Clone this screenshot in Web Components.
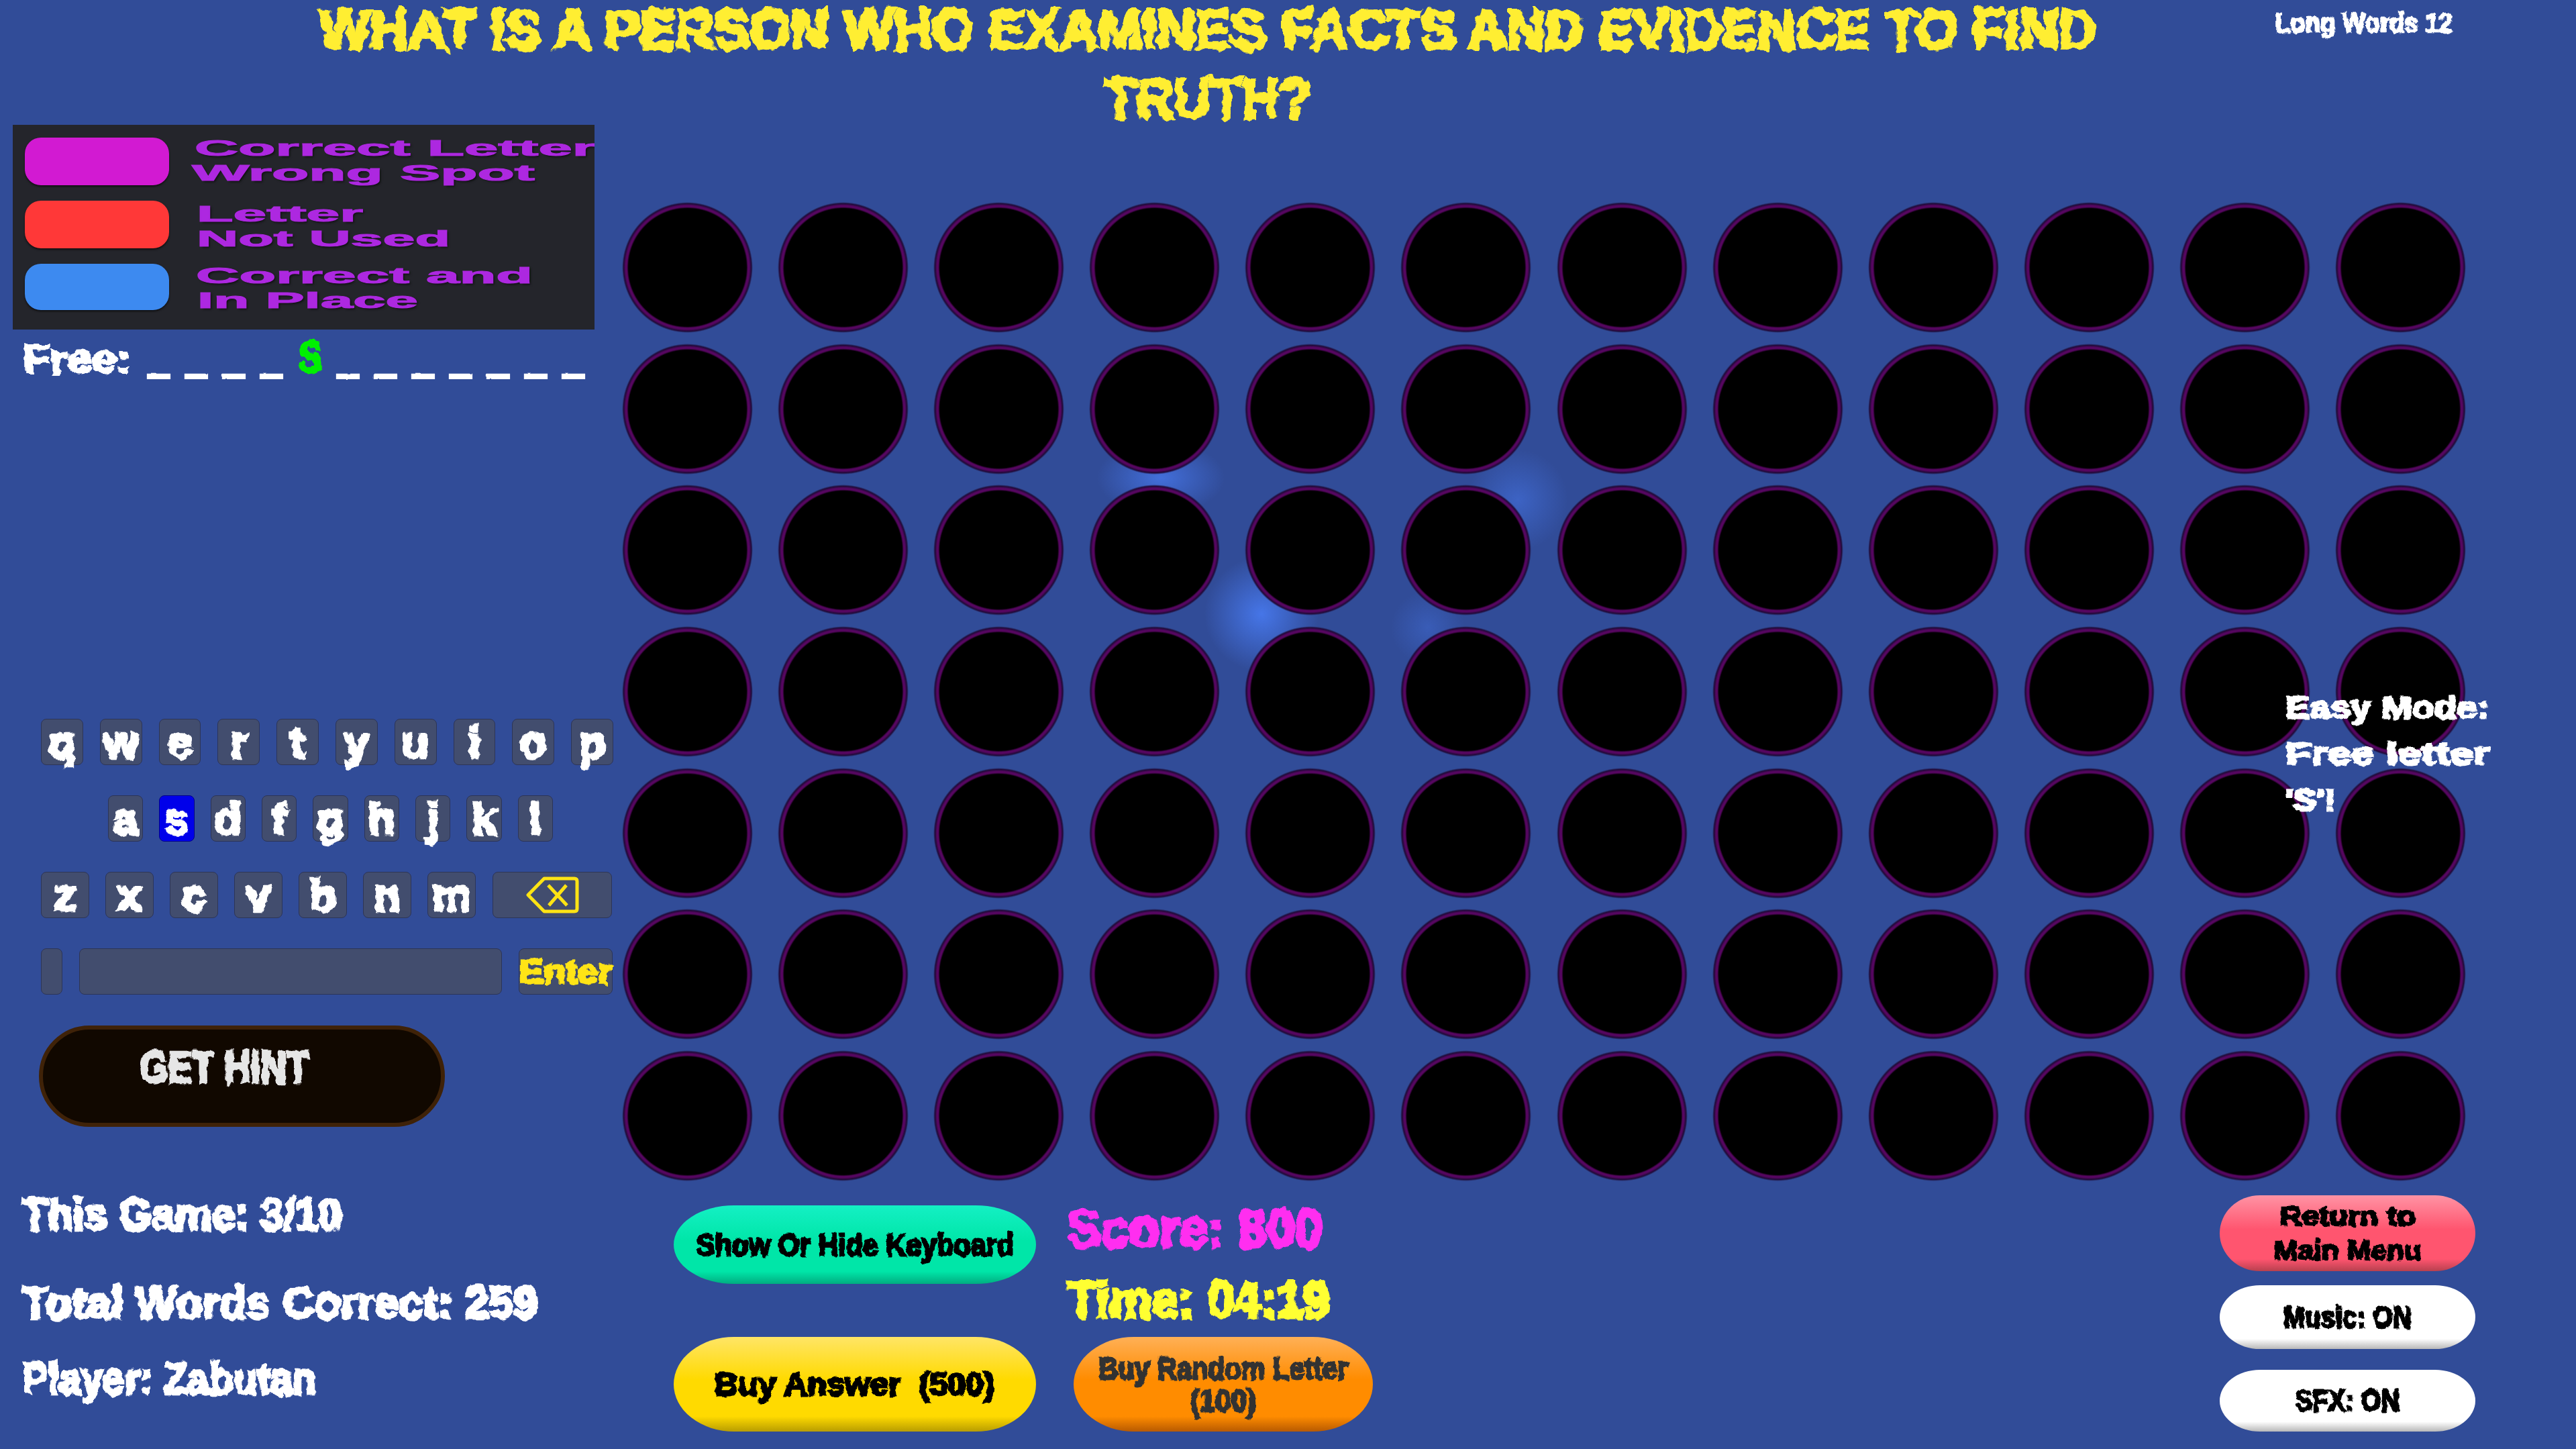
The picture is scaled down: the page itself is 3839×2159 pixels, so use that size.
<!DOCTYPE html>
<html lang="en">
<head>
<meta charset="utf-8">
<title>Long Words</title>
<style>
  html, body { margin: 0; padding: 0; background: #314c98; overflow: hidden; }
</style>
</head>
<body>

<game-screen>
  <quiz-header slot="top"></quiz-header>
  <side-panel slot="left"></side-panel>
  <play-area slot="main"></play-area>
</game-screen>

<script>
const FONT = '"Liberation Sans", Arial, sans-serif'
const measure = document.createElement("canvas").getContext("2d")
let roughId = 0

// one line of the game's lumpy text, squeezed to the width it has in the game
class FitText extends HTMLElement {
  constructor() {
    super()
    this.attachShadow({ mode: "open" })
  }
  connectedCallback() {
    const size = +(this.getAttribute("size") || 60)
    const w = this.getAttribute("w")
    const stroke = this.getAttribute("stroke") || size * 0.065
    const rough = +(this.getAttribute("rough") || size * 0.1)
    const id = "rough" + roughId++
    let sx = 1
    if (w) {
      measure.font = `bold ${size}px "Liberation Sans"`
      sx = +w / measure.measureText(this.textContent.trim()).width
    }
    this.shadowRoot.innerHTML = `
      <style>
        :host { display: inline-block; font: bold ${size}px/1 ${FONT}; ${w ? `width:${w}px;` : ""} }
        span {
          display: inline-block;
          white-space: pre;
          transform: scaleX(${sx});
          transform-origin: 0 0;
          -webkit-text-stroke: ${stroke}px currentColor;
          text-shadow: var(--fit-shadow, none);
          ${rough > 0 ? `filter: url(#${id});` : ""}
        }
        svg { position: absolute; width: 0; height: 0; }
      </style>
      <svg aria-hidden="true"><filter id="${id}" x="-5%" y="-30%" width="110%" height="160%">
        <feTurbulence type="fractalNoise" baseFrequency="${(5 / size).toFixed(3)}" numOctaves="2" seed="${roughId % 7}"/>
        <feDisplacementMap in="SourceGraphic" scale="${rough * 2.2}" xChannelSelector="R" yChannelSelector="G"/>
      </filter></svg>
      <span><slot></slot></span>`
  }
}
customElements.define("fit-text", FitText)

class GameScreen extends HTMLElement {
  constructor() {
    super()
    const shadow = this.attachShadow({ mode: "open" })
    shadow.innerHTML = `
      <style>
        :host {
          display: grid;
          width: 3839px;
          height: 2159px;
          grid-template-columns: 928px 1fr;
          grid-template-rows: 186px 1fr;
          font-family: ${FONT};
          background:
            radial-gradient(ellipse 95px 55px at 1730px 712px, rgba(72,122,240,.75), rgba(72,122,240,0)),
            radial-gradient(circle 85px at 1880px 915px, rgba(72,122,240,.9), rgba(72,122,240,0)),
            radial-gradient(circle 75px at 2262px 745px, rgba(72,122,240,.5), rgba(72,122,240,0)),
            radial-gradient(circle 55px at 2128px 935px, rgba(72,122,240,.35), rgba(72,122,240,0)),
            #314c98;
        }
        .top { grid-column: 1 / 3; }
      </style>
      <div class="top"><slot name="top"></slot></div>
      <slot name="left"></slot>
      <slot name="main"></slot>`
  }
}
customElements.define("game-screen", GameScreen)

class QuizHeader extends HTMLElement {
  constructor() {
    super()
    const shadow = this.attachShadow({ mode: "open" })
    shadow.innerHTML = `
      <style>
        :host { display: flex; height: 186px; padding-top: 3px; box-sizing: border-box; color: #ffee33; }
        .q { display: flex; flex-direction: column; align-items: center; gap: 20px; width: 2700px; margin-left: 455px; }
        .label { color: #fff; margin-left: 236px; padding-top: 11px; }
      </style>
      <div class="q">
        <fit-text size="82" w="2656" rough="8">WHAT IS A PERSON WHO EXAMINES FACTS AND EVIDENCE TO FIND</fit-text>
        <fit-text size="82" w="308" rough="8" style="margin-right:10px">TRUTH?</fit-text>
      </div>
      <div class="label"><fit-text size="40" w="264" rough="3">Long Words 12</fit-text></div>`
  }
}
customElements.define("quiz-header", QuizHeader)

class ColorLegend extends HTMLElement {
  constructor() {
    super()
    const shadow = this.attachShadow({ mode: "open" })
    const row = (color, h, dy, a, aw, ax, b, bw, bx) => `
      <div class="row">
        <div class="swatch" style="background:${color};height:${h}px"></div>
        <div class="words" style="margin-top:${dy}px">
          <fit-text size="33" w="${aw}" rough="0" stroke="1" style="margin-left:${ax}px">${a}</fit-text>
          <fit-text size="33" w="${bw}" rough="0" stroke="1" style="margin-left:${bx}px">${b}</fit-text>
        </div>
      </div>`
    shadow.innerHTML = `
      <style>
        :host {
          display: flex;
          flex-direction: column;
          gap: 23px;
          width: 867px;
          height: 305px;
          margin-left: 19px;
          padding: 19px 0 0 18px;
          box-sizing: border-box;
          background: #24252b;
          overflow: hidden;
          color: #ad28e0;
          --fit-shadow: 1px 2px 2px rgba(0,0,0,.6);
        }
        .row { display: flex; align-items: flex-start; height: 71px; }
        .swatch { width: 215px; border-radius: 24px; flex: none; box-shadow: 0 2px 3px rgba(0,0,0,.6); }
        .words { display: flex; flex-direction: column; gap: 4px; margin-left: 33px; white-space: nowrap; }
        fit-text { display: block; }
      </style>
      ${row("#d21ad2", 71, -1, "Correct Letter,", 618, 5, "Wrong Spot", 511, 1)}
      ${row("#ff3838", 71, 3, "Letter", 248, 8, "Not Used", 378, 8)}
      ${row("#3d8af0", 69, 1, "Correct and", 502, 7, "In Place", 329, 9)}`
  }
}
customElements.define("color-legend", ColorLegend)

class FreeLetters extends HTMLElement {
  constructor() {
    super()
    const shadow = this.attachShadow({ mode: "open" })
    const pattern = "____S_______".split("")
    shadow.innerHTML = `
      <style>
        :host { display: flex; align-items: baseline; height: 60px; margin: 8px 0 0 35px; color: #fff; }
        .slots { display: flex; margin-left: 27px; align-items: baseline; }
        .slot { width: 56px; }
        .hit { color: #00f000; width: 58px; }
      </style>
      <fit-text size="60" w="160" rough="5">Free:</fit-text>
      <div class="slots">
        ${pattern.map(c => c == "_"
          ? `<div class="slot"><fit-text size="60" w="29" stroke="6" rough="1">_</fit-text></div>`
          : `<div class="slot hit"><fit-text size="66" w="34" rough="5">${c}</fit-text></div>`).join("")}
      </div>`
  }
}
customElements.define("free-letters", FreeLetters)

class KeyCap extends HTMLElement {
  constructor() {
    super()
    const shadow = this.attachShadow({ mode: "open" })
    shadow.innerHTML = `
      <style>
        :host {
          display: flex;
          align-items: center;
          justify-content: center;
          flex: var(--grow, 1) 1 0;
          height: 69px;
          box-sizing: border-box;
          background: #424d6e;
          border: 1px solid #2d3557;
          border-radius: 8px;
          color: #fff;
        }
        :host([on]) { background: #0000ea; border-color: #00008a; }
      </style>
      <slot></slot>`
  }
}
customElements.define("key-cap", KeyCap)

class KeyBoard extends HTMLElement {
  constructor() {
    super()
    const shadow = this.attachShadow({ mode: "open" })
    const letter = c => `<key-cap ${c == "s" ? "on" : ""}><fit-text size="66" rough="5">${c}</fit-text></key-cap>`
    const keys = s => s.split("").map(letter).join("")
    shadow.innerHTML = `
      <style>
        :host { display: flex; flex-direction: column; gap: 45px; width: 853px; margin: 512px 0 0 61px; }
        .row { display: flex; gap: 25px; }
        .home { gap: 24px; padding: 0 90px 0 100px; }
        svg { width: 79px; height: 55px; display: block; }
        .enter { color: #ffe414; }
      </style>
      <div class="row">${keys("qwertyuiop")}</div>
      <div class="row home">${keys("asdfghjkl")}</div>
      <div class="row">
        ${keys("zxcvbnm").replace(/<key-cap /g, '<key-cap style="flex:0 0 72px;margin-right:-1px" ')}
        <key-cap style="flex:0 0 178px;margin-left:1px">
          <svg viewBox="0 0 79 55" fill="none" stroke="#ffe414" stroke-width="5" stroke-linejoin="round" stroke-linecap="butt">
            <path d="M27 3 H72 Q76 3 76 7 V48 Q76 52 72 52 H27 L3 27.5 Z"/>
            <path d="M33 13 L61 43 M60 13 L34 43"/>
          </svg>
        </key-cap>
      </div>
      <div class="row">
        <key-cap style="flex:0 0 32px"></key-cap>
        <key-cap style="flex:0 0 630px"></key-cap>
        <key-cap class="enter" style="flex:0 0 140px"><fit-text size="50" w="138" rough="4">Enter</fit-text></key-cap>
      </div>`
  }
}
customElements.define("key-board", KeyBoard)

class HintButton extends HTMLElement {
  constructor() {
    super()
    const shadow = this.attachShadow({ mode: "open" })
    shadow.innerHTML = `
      <style>
        :host {
          display: block;
          width: 605px;
          height: 151px;
          margin: 46px 0 0 58px;
          padding: 22px 0 0 145px;
          box-sizing: border-box;
          background: #110800;
          border: 6px solid #3f2208;
          border-radius: 76px;
          color: #e6e6e6;
        }
      </style>
      <fit-text size="67" w="251" rough="5">GET HINT</fit-text>`
  }
}
customElements.define("hint-button", HintButton)

class SidePanel extends HTMLElement {
  constructor() {
    super()
    const shadow = this.attachShadow({ mode: "open" })
    shadow.innerHTML = `
      <style>
        :host { display: block; color: #fff; }
        .stats { display: flex; flex-direction: column; align-items: flex-start; margin: 97px 0 0 33px; }
      </style>
      <color-legend></color-legend>
      <free-letters></free-letters>
      <key-board></key-board>
      <hint-button></hint-button>
      <div class="stats">
        <fit-text size="66" w="476" rough="5">This Game: 3/10</fit-text>
        <fit-text size="66" w="768" rough="5" style="margin-top:66px">Total Words Correct: 259</fit-text>
        <fit-text size="66" w="438" rough="5" style="margin-top:47px">Player: Zabutan</fit-text>
      </div>`
  }
}
customElements.define("side-panel", SidePanel)

class PegHole extends HTMLElement {
  constructor() {
    super()
    const shadow = this.attachShadow({ mode: "open" })
    shadow.innerHTML = `
      <style>
        :host {
          display: block;
          width: 195px;
          height: 195px;
          border-radius: 50%;
          background: radial-gradient(closest-side, #000 0 90%, #560660 92.5%, #560660 94.5%, #200a38 97.5%, rgba(40,20,90,0) 100%);
        }
      </style>`
  }
}
customElements.define("peg-hole", PegHole)

class PillButton extends HTMLElement {
  constructor() {
    super()
    const shadow = this.attachShadow({ mode: "open" })
    shadow.innerHTML = `
      <style>
        :host {
          display: flex;
          flex-direction: column;
          align-items: center;
          justify-content: center;
          box-sizing: border-box;
          border-radius: 90px / 50%;
          color: #000;
          background: linear-gradient(var(--hi) 0, var(--mid) 45%, var(--mid) 84%, var(--lo) 100%);
        }
      </style>
      <slot></slot>`
  }
}
customElements.define("pill-button", PillButton)

class PlayArea extends HTMLElement {
  constructor() {
    super()
    const shadow = this.attachShadow({ mode: "open" })
    shadow.innerHTML = `
      <style>
        :host { display: block; position: relative; }
        .board {
          display: grid;
          grid-template-columns: repeat(12, 195px);
          column-gap: 37.1px;
          row-gap: 15.7px;
          padding: 115px 0 0;
          margin: 0 0 -1px -1px;
        }
        .note {
          position: absolute;
          left: 2478px;
          top: 845px;
          display: flex;
          flex-direction: column;
          align-items: flex-start;
          gap: 23px;
          color: #fff;
        }
        .controls { display: flex; padding-left: 76px; }
        .one { width: 540px; }
        .two { display: flex; flex-direction: column; align-items: flex-start; margin: 32px 0 0 47px; }
        .three { margin-left: auto; margin-right: 150px; width: 381px; padding-top: 22px; }
        .teal { --hi: #14f0c4; --mid: #00e6a8; --lo: #00ad80; }
        .gold { --hi: #ffe566; --mid: #ffda00; --lo: #b89d00; }
        .orange { --hi: #ffb056; --mid: #ff8c00; --lo: #b85a00; color: #333; }
        .pink { --hi: #ff93a4; --mid: #ff556f; --lo: #b8404f; }
        .white { --hi: #fff; --mid: #fff; --lo: #b8b8b8; }
        .round { border-radius: 60px / 50%; }
      </style>
      <div class="board">${"<peg-hole></peg-hole>".repeat(84)}</div>
      <div class="note">
        <fit-text size="46" w="304" rough="3">Easy Mode:</fit-text>
        <fit-text size="46" w="304" rough="3">Free letter</fit-text>
        <fit-text size="46" w="75" rough="3">'S'!</fit-text>
      </div>
      <div class="controls">
        <div class="one">
          <pill-button class="teal" style="height:117px;margin:37px 0 79px"><fit-text size="46" w="473" rough="3">Show Or Hide Keyboard</fit-text></pill-button>
          <pill-button class="gold" style="height:141px"><fit-text size="48" w="419" rough="3">Buy Answer  (500)</fit-text></pill-button>
        </div>
        <div class="two">
          <fit-text size="80" w="380" rough="6" style="color:#ff2ef0">Score: 800</fit-text>
          <fit-text size="76" w="391" rough="6" style="color:#ffff33;margin-top:28px">Time: 04:19</fit-text>
          <pill-button class="orange" style="height:141px;width:446px;margin:17px 0 0 9px;gap:2px">
            <fit-text size="46" w="372" rough="3">Buy Random Letter</fit-text>
            <fit-text size="46" w="98" rough="3">(100)</fit-text>
          </pill-button>
        </div>
        <div class="three">
          <pill-button class="pink round" style="height:113px;gap:11px">
            <fit-text size="40" w="202" rough="3">Return to</fit-text>
            <fit-text size="40" w="220" rough="3">Main Menu</fit-text>
          </pill-button>
          <pill-button class="white round" style="height:95px;margin-top:21px"><fit-text size="44" w="191" rough="3">Music: ON</fit-text></pill-button>
          <pill-button class="white round" style="height:92px;margin-top:31px"><fit-text size="44" w="155" rough="3">SFX: ON</fit-text></pill-button>
        </div>
      </div>`
  }
}
customElements.define("play-area", PlayArea)
</script>
</body>
</html>
